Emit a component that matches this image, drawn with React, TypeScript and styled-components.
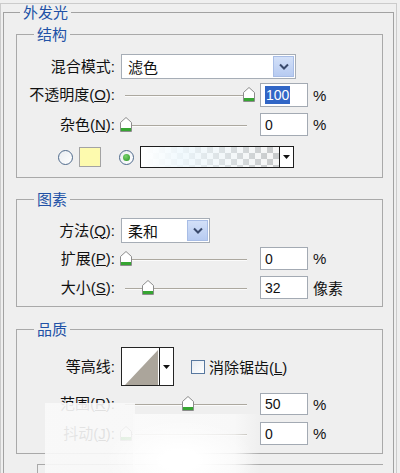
import React from "react";
import styled, { createGlobalStyle } from "styled-components";

const Global = createGlobalStyle`
  html, body { margin: 0; padding: 0; background: #efefef; }
  body { font-family: "Liberation Sans", "Noto Sans CJK SC", sans-serif; color: #111; }
  * { box-sizing: border-box; }
`;

const Page = styled.div`
  position: relative;
  width: 400px;
  height: 473px;
  overflow: hidden;
  background: #efefef;
  padding-top: 3px;
`;

const Frame = styled.div`
  width: 397px;
  height: 480px;
  border: 1px solid #cbcbcb;
  border-bottom: none;
  padding: 0 2px;
`;

const OuterGroup = styled.fieldset`
  margin: 0;
  padding: 0;
  min-width: 0;
  height: 476px;
  border: 1px solid #a2a2a2;
  border-bottom: none;
`;

const Legend = styled.legend<{ $indent: number }>`
  margin-left: ${(p) => p.$indent}px;
  padding: 0 3px;
  font-family: "Noto Sans CJK SC", sans-serif;
  font-size: 15px;
  line-height: 16px;
  color: #2151a6;
`;

const OuterBody = styled.div`
  display: flex;
  flex-direction: column;
  padding: 0 10px 0 12px;
`;

const Section = styled.fieldset<{ $h: number; $mt: number }>`
  margin: ${(p) => p.$mt}px 0 0 0;
  padding: 0;
  min-width: 0;
  height: ${(p) => p.$h}px;
  border: 1px solid #a9a9a9;
`;

const SectionBody = styled.div`
  display: flex;
  flex-direction: column;
`;

const FieldRow = styled.div<{ $mt: number; $h: number }>`
  display: grid;
  grid-template-columns: 98px 1fr;
  column-gap: 5px;
  align-items: center;
  margin-top: ${(p) => p.$mt}px;
  height: ${(p) => p.$h}px;
`;

const Label = styled.span`
  text-align: right;
  font-size: 15px;
  line-height: 18px;
  white-space: nowrap;
  color: #111;
`;

const Controls = styled.div`
  display: flex;
  align-items: center;
  height: 100%;
`;

const Select = styled.div<{ $w: number }>`
  display: flex;
  align-items: stretch;
  width: ${(p) => p.$w}px;
  height: 25px;
  margin-left: 1px;
  border: 1px solid #a6adb6;
  background: #fff;
`;

const SelectText = styled.span`
  flex: 1;
  display: flex;
  align-items: center;
  padding-left: 6px;
  font-size: 15px;
  color: #111;
`;

const SelectButton = styled.span`
  width: 21px;
  margin: 1px;
  display: flex;
  align-items: center;
  justify-content: center;
  background: linear-gradient(#d3e0f8, #b7cbf1);
  border: 1px solid #a8bde6;
`;

const SliderBox = styled.div`
  position: relative;
  flex: none;
  width: 135px;
  height: 16px;
`;

const Track = styled.div`
  position: absolute;
  left: 5px;
  right: 8px;
  top: 8px;
  height: 1px;
  background: #aca89f;
  box-shadow: 0 1px 0 #fbfbfb;
`;

const ThumbSvg = styled.svg`
  position: absolute;
  top: 0;
  width: 12px;
  height: 15px;
`;

const NumberBox = styled.div<{ $h: number }>`
  display: flex;
  align-items: center;
  width: 48px;
  height: ${(p) => p.$h}px;
  margin-left: 5px;
  padding-left: 4px;
  border: 1px solid #a3aab3;
  background: #fff;
  font-size: 14px;
  color: #111;
`;

const Selected = styled.span`
  background: #3166c6;
  color: #fff;
  padding: 1px;
  line-height: 16px;
`;

const Unit = styled.span`
  margin-left: 5px;
  font-size: 15px;
  color: #111;
  white-space: nowrap;
`;

const ColorRow = styled.div<{ $mt: number }>`
  display: flex;
  align-items: center;
  height: 22px;
  margin-top: ${(p) => p.$mt}px;
  padding-left: 41px;
`;

const Radio = styled.span<{ $on?: boolean; $ml: number }>`
  position: relative;
  flex: none;
  width: 15px;
  height: 15px;
  margin-left: ${(p) => p.$ml}px;
  border-radius: 50%;
  border: 1px solid #4f6a8c;
  background: linear-gradient(135deg, #e9edf2, #ffffff);
  &::after {
    content: "";
    display: ${(p) => (p.$on ? "block" : "none")};
    position: absolute;
    left: 3px;
    top: 3px;
    width: 7px;
    height: 7px;
    border-radius: 50%;
    background: radial-gradient(circle at 40% 35%, #7bd36f, #23931f);
  }
`;

const Swatch = styled.span`
  flex: none;
  width: 22px;
  height: 20px;
  margin-left: 6px;
  border: 1px solid #a3a3a3;
  background: #fdfaae;
`;

const GradientPicker = styled.div`
  display: flex;
  flex: none;
  width: 154px;
  height: 22px;
  margin-left: 6px;
  border: 1px solid #1d1d1d;
`;

const GradientFill = styled.span`
  flex: 1;
  background:
    linear-gradient(to right, #ffffff 0%, rgba(240, 250, 255, 0.85) 30%, rgba(255, 255, 255, 0) 95%),
    repeating-conic-gradient(#c9cbcc 0 25%, #f6f6f6 0 50%) 0 0 / 12px 12px;
`;

const ArrowCell = styled.span`
  width: 14px;
  display: flex;
  align-items: center;
  justify-content: center;
  border-left: 1px solid #1d1d1d;
  background: #fff;
`;

const ContourPicker = styled.div`
  display: flex;
  flex: none;
  width: 53px;
  height: 39px;
  margin-left: 1px;
  border: 1px solid #242424;
  background: #fff;
`;

const ContourPreview = styled.svg`
  width: 37px;
  height: 37px;
  flex: none;
`;

const CheckBox = styled.span`
  flex: none;
  width: 14px;
  height: 14px;
  margin-left: 17px;
  border: 1px solid #58789f;
  background: linear-gradient(135deg, #e6ebf1, #fff);
`;

const CheckLabel = styled.span`
  margin-left: 4px;
  font-size: 15px;
  color: #111;
  white-space: nowrap;
`;

const NextBlock = styled.div`
  margin: 10px 0 0 21px;
  height: 20px;
  border-top: 1px solid #a9a9a9;
  border-left: 1px solid #a9a9a9;
`;

const Wash = styled.div`
  position: absolute;
  left: 45px;
  top: 402px;
  width: 215px;
  height: 71px;
  pointer-events: none;
  background:
    radial-gradient(ellipse 75px 40px at 135px 58px, rgba(255, 255, 255, 1) 25%, rgba(255, 255, 255, 0) 100%),
    linear-gradient(to right, rgba(249, 249, 249, 0.92), rgba(249, 249, 249, 0.88)) 0 1px / 90px 70px no-repeat,
    linear-gradient(to right, rgba(251, 251, 251, 0.9), rgba(251, 251, 251, 0.75) 80%, rgba(251, 251, 251, 0)) 88px 12px / 127px 59px no-repeat;
`;

const U = styled.span`
  text-decoration: underline;
`;

function Thumb({ pct }: { pct: number }) {
  const left = Math.round(pct * 123);
  return (
    <ThumbSvg viewBox="0 0 12 15" style={{ left }}>
      <path d="M6 0.5 L11.5 5.5 L11.5 14.5 L0.5 14.5 L0.5 5.5 Z" fill="#fff" stroke="#8c8c8c" />
      <rect x="1" y="11" width="10" height="3" fill="#36a532" />
    </ThumbSvg>
  );
}

function Slider({ pct }: { pct: number }) {
  return (
    <SliderBox>
      <Track />
      <Thumb pct={pct} />
    </SliderBox>
  );
}

function Chevron() {
  return (
    <svg width="10" height="7" viewBox="0 0 10 7">
      <polyline points="1,1.5 5,5.5 9,1.5" fill="none" stroke="#3a4a6c" strokeWidth="2" />
    </svg>
  );
}

function DownTriangle() {
  return (
    <svg width="7" height="4" viewBox="0 0 7 4">
      <polygon points="0,0 7,0 3.5,4" fill="#111" />
    </svg>
  );
}

export default function App() {
  return (
    <>
      <Global />
      <Page>
        <Frame>
          <OuterGroup>
            <Legend $indent={16}>外发光</Legend>
            <OuterBody>
              <Section $mt={6} $h={152}>
                <Legend $indent={17}>结构</Legend>
                <SectionBody>
                  <FieldRow $mt={12} $h={25}>
                    <Label>混合模式:</Label>
                    <Controls>
                      <Select $w={175}>
                        <SelectText>滤色</SelectText>
                        <SelectButton>
                          <Chevron />
                        </SelectButton>
                      </Select>
                    </Controls>
                  </FieldRow>
                  <FieldRow $mt={4} $h={24}>
                    <Label>
                      不透明度(<U>O</U>):
                    </Label>
                    <Controls>
                      <Slider pct={1} />
                      <NumberBox $h={24}>
                        <Selected>100</Selected>
                      </NumberBox>
                      <Unit>%</Unit>
                    </Controls>
                  </FieldRow>
                  <FieldRow $mt={6} $h={23}>
                    <Label>
                      杂色(<U>N</U>):
                    </Label>
                    <Controls>
                      <Slider pct={0} />
                      <NumberBox $h={23}>0</NumberBox>
                      <Unit>%</Unit>
                    </Controls>
                  </FieldRow>
                  <ColorRow $mt={10}>
                    <Radio $ml={0} />
                    <Swatch />
                    <Radio $ml={18} $on />
                    <GradientPicker>
                      <GradientFill />
                      <ArrowCell>
                        <DownTriangle />
                      </ArrowCell>
                    </GradientPicker>
                  </ColorRow>
                </SectionBody>
              </Section>

              <Section $mt={13} $h={116}>
                <Legend $indent={17}>图素</Legend>
                <SectionBody>
                  <FieldRow $mt={11} $h={25}>
                    <Label>
                      方法(<U>Q</U>):
                    </Label>
                    <Controls>
                      <Select $w={89}>
                        <SelectText>柔和</SelectText>
                        <SelectButton>
                          <Chevron />
                        </SelectButton>
                      </Select>
                    </Controls>
                  </FieldRow>
                  <FieldRow $mt={4} $h={23}>
                    <Label>
                      扩展(<U>P</U>):
                    </Label>
                    <Controls>
                      <Slider pct={0} />
                      <NumberBox $h={23}>0</NumberBox>
                      <Unit>%</Unit>
                    </Controls>
                  </FieldRow>
                  <FieldRow $mt={6} $h={23}>
                    <Label>
                      大小(<U>S</U>):
                    </Label>
                    <Controls>
                      <Slider pct={0.18} />
                      <NumberBox $h={23}>32</NumberBox>
                      <Unit>像素</Unit>
                    </Controls>
                  </FieldRow>
                </SectionBody>
              </Section>

              <Section $mt={14} $h={133}>
                <Legend $indent={17}>品质</Legend>
                <SectionBody>
                  <FieldRow $mt={10} $h={39}>
                    <Label>等高线:</Label>
                    <Controls>
                      <ContourPicker>
                        <ContourPreview viewBox="0 0 37 37">
                          <polygon points="3,37 36,2 36,37" fill="#aba59b" />
                        </ContourPreview>
                        <ArrowCell>
                          <DownTriangle />
                        </ArrowCell>
                      </ContourPicker>
                      <CheckBox />
                      <CheckLabel>
                        消除锯齿(<U>L</U>)
                      </CheckLabel>
                    </Controls>
                  </FieldRow>
                  <FieldRow $mt={7} $h={22}>
                    <Label>
                      范围(<U>R</U>):
                    </Label>
                    <Controls>
                      <Slider pct={0.5} />
                      <NumberBox $h={22}>50</NumberBox>
                      <Unit>%</Unit>
                    </Controls>
                  </FieldRow>
                  <FieldRow $mt={7} $h={23}>
                    <Label>
                      抖动(<U>J</U>):
                    </Label>
                    <Controls>
                      <Slider pct={0} />
                      <NumberBox $h={23}>0</NumberBox>
                      <Unit>%</Unit>
                    </Controls>
                  </FieldRow>
                </SectionBody>
              </Section>
              <NextBlock />
            </OuterBody>
          </OuterGroup>
        </Frame>
        <Wash />
      </Page>
    </>
  );
}
